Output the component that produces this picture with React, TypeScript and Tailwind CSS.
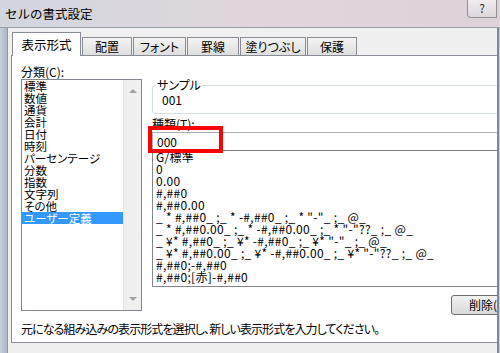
const categories = ['標準', '数値', '通貨', '会計', '日付', '時刻', 'パーセンテージ', '分数', '指数', '文字列', 'その他', 'ユーザー定義'];

const formats = [
  'G/標準',
  '0',
  '0.00',
  '#,##0',
  '#,##0.00',
  '_ * #,##0_ ;_ * -#,##0_ ;_ * "-"_ ;_ @_',
  '_ * #,##0.00_ ;_ * -#,##0.00_ ;_ * "-"??_ ;_ @_',
  '_ ¥* #,##0_ ;_ ¥* -#,##0_ ;_ ¥* "-"_ ;_ @_',
  '_ ¥* #,##0.00_ ;_ ¥* -#,##0.00_ ;_ ¥* "-"??_ ;_ @_',
  '#,##0;-#,##0',
  '#,##0;[赤]-#,##0',
];

const tabs = [
  { label: '配置', w: 'w-[50px]' },
  { label: 'フォント', w: 'w-[53px]' },
  { label: '罫線', w: 'w-[52px]' },
  { label: '塗りつぶし', w: 'w-[66px]' },
  { label: '保護', w: 'w-[50px]' },
];

export default function App() {
  return (
    <div
      className="w-[500px] h-[353px] flex flex-col overflow-hidden bg-[#bfcad8] text-[12px] text-black [font-feature-settings:'palt']"
      style={{ fontFamily: '"Noto Sans CJK JP", "Noto Sans", sans-serif' }}
    >
      {/* Title bar */}
      <div className="h-[28px] shrink-0 flex items-start justify-between bg-gradient-to-r from-[#d2d6df] via-[#e0d6dc] to-[#dcd2d8] border-b border-[#9aa0a8]">
        <span className="pl-[5px] pt-[6px] leading-[16px] text-[12.5px] [font-feature-settings:normal]">セルの書式設定</span>
        <div className="mr-[3px] w-[30px] h-[19px] -mt-px flex items-center justify-center rounded-bl-[4px] border border-t-0 border-[#8f8f94] bg-gradient-to-b from-[#f2eef0] to-[#ddd6da] text-[12px] leading-none text-[#333]">
          ?
        </div>
      </div>

      {/* Body */}
      <div className="flex flex-1 min-h-0">
        <div className="w-[8px] shrink-0 bg-gradient-to-r from-[#c6d1de] to-[#aab7c7] border-r border-[#8e99a8]" />
        <div className="flex-1 min-w-0 flex flex-col bg-[#f0f0f0] border-r-2 border-[#7f8995] overflow-hidden">
          {/* Tabs */}
          <div className="flex items-end pt-[4px] pl-[4px] gap-[1px] h-[27px] shrink-0">
            <div className="relative z-10 -mb-px w-[69px] h-[24px] flex items-center justify-center bg-white border border-b-0 border-[#898c95] leading-[14px] text-[12.5px]">
              表示形式
            </div>
            {tabs.map((t) => (
              <div
                key={t.label}
                className={`${t.w} h-[18px] flex items-center justify-center bg-gradient-to-b from-[#f4f4f4] to-[#dedede] border border-b-0 border-[#898c95] leading-[14px]`}
              >
                {t.label}
              </div>
            ))}
          </div>

          {/* Tab page */}
          <div className="ml-[3px] h-[288px] shrink-0 bg-white border border-r-0 border-[#898c95] flex flex-col pl-[9px]">
            <div className="flex gap-[10px] items-start">
              {/* Category */}
              <div className="w-[121px] shrink-0 pt-[9px] flex flex-col">
                <div className="h-[14px] leading-[14px]">分類(C):</div>
                <div className="h-[232px] border border-[#828790] flex">
                  <div className="flex-1 flex flex-col text-[11.5px]">
                    {categories.map((c) => (
                      <div
                        key={c}
                        className={`h-[12px] leading-[12px] pl-[2px] whitespace-nowrap ${
                          c === 'ユーザー定義' ? 'bg-[#3399ff] text-white' : ''
                        }`}
                      >
                        {c}
                      </div>
                    ))}
                  </div>
                  <div className="w-[18px] bg-[#f0f0f0] border-l border-[#e6e6e6] flex flex-col items-center justify-between py-[9px]">
                    <div className="w-0 h-0 border-l-[4px] border-r-[4px] border-b-[4px] border-l-transparent border-r-transparent border-b-[#a0a0a0]" />
                    <div className="w-0 h-0 border-l-[4px] border-r-[4px] border-t-[4px] border-l-transparent border-r-transparent border-t-[#a0a0a0]" />
                  </div>
                </div>
              </div>

              {/* Right column */}
              <div className="w-[360px] shrink-0 pt-[22px] flex flex-col">
                <fieldset className="h-[36px] border border-[#d5dfe5] rounded-[3px] pl-[9px]">
                  <legend className="-ml-[6px] px-[1px] leading-[14px]">サンプル</legend>
                  <div className="leading-[14px] mt-[1px]">001</div>
                </fieldset>
                <div className="mt-[3px] h-[14px] leading-[14px]">種類(T):</div>
                <div className="relative mt-[1px] h-[19px] border border-[#abadb3] border-b-[#7a7a7a] flex items-center pl-[4px]">
                  000
                  <div className="absolute -left-[5px] -top-[7px] w-[75px] h-[27px] border-[4px] border-[#ff0000]" />
                </div>
                <div className="h-[136px] border border-[#828790] border-t-0 pl-[3px] overflow-hidden tracking-[0.3px]">
                  {formats.map((f) => (
                    <div key={f} className="h-[12px] leading-[12px] whitespace-pre">
                      {f}
                    </div>
                  ))}
                </div>
                <div className="mt-[8px] pl-[299px]">
                  <div className="w-[60px] h-[20px] rounded-[3px] border border-[#707070] bg-gradient-to-b from-[#f2f2f2] to-[#d9d9d9] flex items-center pl-[17px] leading-[14px] whitespace-nowrap">
                    削除(D)
                  </div>
                </div>
              </div>
            </div>
            <div className="mt-[7px] leading-[14px] whitespace-nowrap tracking-[-0.9px]">
              元になる組み込みの表示形式を選択し、新しい表示形式を入力してください。
            </div>
          </div>
        </div>
        <div className="w-[1px] shrink-0 bg-[#c6d1de]" />
      </div>
    </div>
  );
}
